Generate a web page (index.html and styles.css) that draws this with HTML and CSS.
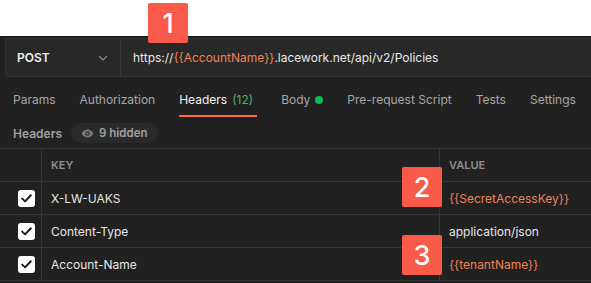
FILE: index.html
```html
<!DOCTYPE html>
<html lang="en">
<head>
  <meta charset="UTF-8" />
  <title>Postman Request</title>
  <link rel="stylesheet" href="styles.css">
</head>
<body>
  <div class="top"></div>

  <main class="panel">
    <div class="request-bar">
      <div class="method">
        <span>POST</span>
        <svg class="chev" width="10" height="6" viewBox="0 0 10 6"><path d="M1 1l4 4 4-4" fill="none" stroke="#8a8a8a" stroke-width="1.2"/></svg>
      </div>
      <div class="url">https://<span class="var">{{AccountName}}</span>.lacework.net/api/v2/Policies</div>
    </div>

    <nav class="tabs">
      <span class="tab">Params</span>
      <span class="tab">Authorization</span>
      <span class="tab active">Headers <span class="count">(12)</span></span>
      <span class="tab">Body <i class="dot"></i></span>
      <span class="tab">Pre-request Script</span>
      <span class="tab">Tests</span>
      <span class="tab">Settings</span>
    </nav>

    <div class="subbar">
      <span class="sublabel">Headers</span>
      <span class="pill">
        <svg width="13" height="9" viewBox="0 0 13 9"><path d="M0.5 4.5C2 1.8 4 0.5 6.5 0.5S11 1.8 12.5 4.5C11 7.2 9 8.5 6.5 8.5S2 7.2 0.5 4.5Z" fill="#7a7a7a"/><circle cx="6.5" cy="4.5" r="2.2" fill="#2b2b2b"/><circle cx="6.5" cy="4.5" r="1.1" fill="#7a7a7a"/></svg>
        9 hidden
      </span>
    </div>

    <div class="table">
      <div class="row head">
        <div class="cell check"></div>
        <div class="cell key">KEY</div>
        <div class="cell value">VALUE</div>
      </div>
      <div class="row">
        <div class="cell check"><span class="box"><svg width="11" height="9" viewBox="0 0 11 9"><path d="M1.2 4.6l2.9 2.8 5.7-6.2" fill="none" stroke="#1e1e1e" stroke-width="2" stroke-linecap="round" stroke-linejoin="round"/></svg></span></div>
        <div class="cell key">X-LW-UAKS</div>
        <div class="cell value var">{{SecretAccessKey}}</div>
      </div>
      <div class="row">
        <div class="cell check"><span class="box"><svg width="11" height="9" viewBox="0 0 11 9"><path d="M1.2 4.6l2.9 2.8 5.7-6.2" fill="none" stroke="#1e1e1e" stroke-width="2" stroke-linecap="round" stroke-linejoin="round"/></svg></span></div>
        <div class="cell key">Content-Type</div>
        <div class="cell value">application/json</div>
      </div>
      <div class="row">
        <div class="cell check"><span class="box"><svg width="11" height="9" viewBox="0 0 11 9"><path d="M1.2 4.6l2.9 2.8 5.7-6.2" fill="none" stroke="#1e1e1e" stroke-width="2" stroke-linecap="round" stroke-linejoin="round"/></svg></span></div>
        <div class="cell key">Account-Name</div>
        <div class="cell value var">{{tenantName}}</div>
      </div>
    </div>
  </main>

  <span class="badge b1">1</span>
  <span class="badge b2">2</span>
  <span class="badge b3">3</span>
</body>
</html>
```

FILE: styles.css
```css
:root {
  --bg: #212121;
  --box: #282828;
  --line: #353535;
  --text: #e6e6e6;
  --muted: #a6a6a6;
  --var: #ef8354;
  --badge: #f95a4a;
}

* {
  box-sizing: border-box;
}

body {
  margin: 0;
  background: #fff;
  font-family: Inter, "Noto Sans", sans-serif;
  font-size: 12px;
  position: relative;
  height: 283px;
  overflow: hidden;
}

.top {
  height: 36px;
  background: #fff;
}

.panel {
  background: var(--bg);
  border-top: 1px solid #1a1a1a;
  height: 247px;
  padding-top: 1px;
}

.request-bar {
  margin-left: 5px;
  height: 39px;
  display: flex;
  background: var(--box);
  border: 1px solid #333;
  border-right: none;
  border-radius: 4px 0 0 4px;
}

.method {
  width: 115px;
  display: flex;
  align-items: center;
  justify-content: space-between;
  padding: 0 12px 0 11px;
  border-right: 1px solid #383838;
  color: #f0f0f0;
  font-weight: 600;
}

.url {
  display: flex;
  align-items: center;
  padding-left: 12px;
  color: #e8e8e8;
}

.var {
  color: var(--var);
}

.tabs {
  display: flex;
  gap: 24px;
  padding: 8px 0 0 13px;
  height: 41px;
}

.tab {
  color: var(--muted);
  height: 32px;
  line-height: 32px;
  white-space: nowrap;
  display: flex;
  align-items: center;
  gap: 5px;
  border-bottom: 2px solid transparent;
}

.tab.active {
  color: #f0f0f0;
  padding-right: 4px;
  border-bottom-color: #ff6c37;
}

.count {
  color: #49b26f;
}

.dot {
  display: inline-block;
  width: 8px;
  height: 8px;
  border-radius: 50%;
  background: #0cbb52;
}

.subbar {
  display: flex;
  align-items: center;
  gap: 9px;
  padding-left: 13px;
  height: 30px;
}

.sublabel {
  color: #a0a0a0;
  font-weight: 600;
}

.pill {
  display: flex;
  align-items: center;
  gap: 5px;
  height: 20px;
  padding: 0 10px;
  border-radius: 10px;
  background: #2a2a2a;
  color: #a0a0a0;
  font-weight: 600;
  font-size: 11.5px;
}

.table {
  border-top: 1px solid var(--line);
}

.row {
  display: flex;
  height: 33px;
  border-bottom: 1px solid var(--line);
}

.cell {
  display: flex;
  align-items: center;
  color: var(--text);
}

.check {
  width: 42px;
  justify-content: center;
  padding-left: 14px;
  padding-right: 2px;
  border-right: 1px solid var(--line);
}

.key {
  width: 398px;
  padding-left: 9px;
  border-right: 1px solid var(--line);
}

.value {
  padding-left: 9px;
}

.value.var {
  color: var(--var);
}

.head .cell {
  color: #8e8e8e;
  font-weight: 600;
  font-size: 11px;
}

.box {
  width: 17px;
  height: 17px;
  border-radius: 3px;
  background: #fff;
  display: flex;
  align-items: center;
  justify-content: center;
}

.badge {
  position: absolute;
  width: 40px;
  height: 40px;
  background: var(--badge);
  color: #fff;
  border-radius: 2px;
  font-family: Inter, "Liberation Sans", sans-serif;
  font-weight: 500;
  font-size: 27px;
  display: flex;
  align-items: center;
  justify-content: center;
}

.b1 { left: 148px; top: 3px; }
.b2 { left: 402px; top: 167px; }
.b3 { left: 402px; top: 235px; }
```
